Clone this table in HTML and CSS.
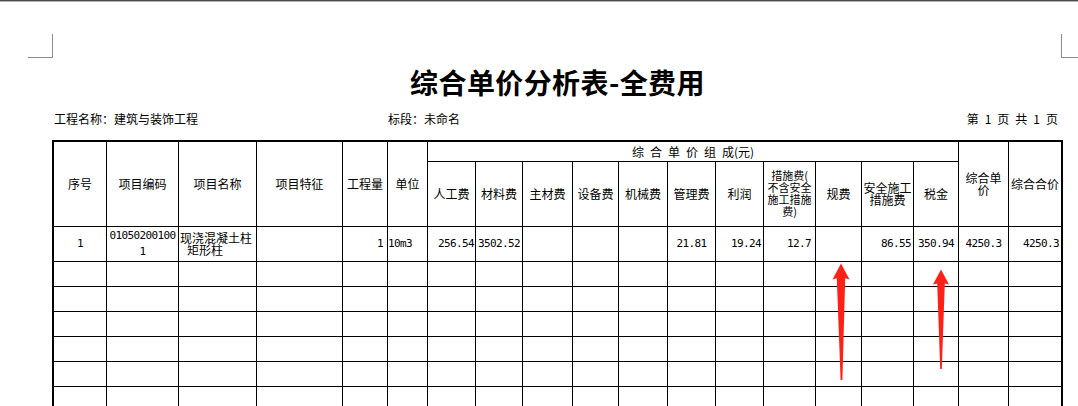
FILE: index.html
```html
<!DOCTYPE html>
<html lang="zh-CN">
<head>
<meta charset="utf-8">
<title>综合单价分析表-全费用</title>
<link rel="stylesheet" href="styles.css">
</head>
<body>
<div class="page">
  <div class="topbar"></div>
  <div class="marks"><span class="mark mark-l"></span><span class="mark mark-r"></span></div>
  <div class="sheet">
    <h1 class="title">综合单价分析表-全费用</h1>
    <div class="info">
      <span>工程名称：建筑与装饰工程</span>
      <span>标段：未命名</span>
      <span class="pageno">第 1 页 共 1 页</span>
    </div>
    <div class="table-wrap">
      <table class="grid">
        <colgroup>
          <col style="width:53px"><col style="width:72px"><col style="width:78px"><col style="width:86px">
          <col style="width:45px"><col style="width:40px"><col style="width:48px"><col style="width:47px">
          <col style="width:50px"><col style="width:46px"><col style="width:49px"><col style="width:48px">
          <col style="width:48px"><col style="width:52px"><col style="width:46px"><col style="width:52px">
          <col style="width:45px"><col style="width:50px"><col style="width:54px">
        </colgroup>
        <thead>
          <tr class="h1">
            <th rowspan="2">序号</th>
            <th rowspan="2">项目编码</th>
            <th rowspan="2">项目名称</th>
            <th rowspan="2">项目特征</th>
            <th rowspan="2">工程量</th>
            <th rowspan="2">单位</th>
            <th colspan="11" class="group">综 合 单 价 组 成(元)</th>
            <th rowspan="2" class="tight">综合单<br>价</th>
            <th rowspan="2" class="last">综合合价</th>
          </tr>
          <tr class="h2">
            <th>人工费</th>
            <th>材料费</th>
            <th>主材费</th>
            <th>设备费</th>
            <th>机械费</th>
            <th>管理费</th>
            <th>利润</th>
            <th class="tight squeeze">措施费(<br>不含安全<br>施工措施<br>费)</th>
            <th>规费</th>
            <th class="tight">安全施工<br>措施费</th>
            <th>税金</th>
          </tr>
        </thead>
        <tbody>
          <tr class="data">
            <td class="c num">1</td>
            <td class="c num code">010502001001</td>
            <td class="l name"><span class="ln">现浇混凝土柱</span><span class="ln ind">矩形柱</span></td>
            <td></td>
            <td class="r num pr4">1</td>
            <td class="l num">10m3</td>
            <td class="r num pr1">256.54</td>
            <td class="r num">3502.52</td>
            <td></td>
            <td></td>
            <td></td>
            <td class="c num">21.81</td>
            <td class="r num">19.24</td>
            <td class="r num pr4">12.7</td>
            <td></td>
            <td class="r num">86.55</td>
            <td class="c num">350.94</td>
            <td class="c num">4250.3</td>
            <td class="r num last">4250.3</td>
          </tr>
          <tr class="empty"><td></td><td></td><td></td><td></td><td></td><td></td><td></td><td></td><td></td><td></td><td></td><td></td><td></td><td></td><td></td><td></td><td></td><td></td><td class="last"></td></tr>
          <tr class="empty"><td></td><td></td><td></td><td></td><td></td><td></td><td></td><td></td><td></td><td></td><td></td><td></td><td></td><td></td><td></td><td></td><td></td><td></td><td class="last"></td></tr>
          <tr class="empty"><td></td><td></td><td></td><td></td><td></td><td></td><td></td><td></td><td></td><td></td><td></td><td></td><td></td><td></td><td></td><td></td><td></td><td></td><td class="last"></td></tr>
          <tr class="empty"><td></td><td></td><td></td><td></td><td></td><td></td><td></td><td></td><td></td><td></td><td></td><td></td><td></td><td></td><td></td><td></td><td></td><td></td><td class="last"></td></tr>
          <tr class="empty"><td></td><td></td><td></td><td></td><td></td><td></td><td></td><td></td><td></td><td></td><td></td><td></td><td></td><td></td><td></td><td></td><td></td><td></td><td class="last"></td></tr>
          <tr class="empty"><td></td><td></td><td></td><td></td><td></td><td></td><td></td><td></td><td></td><td></td><td></td><td></td><td></td><td></td><td></td><td></td><td></td><td></td><td class="last"></td></tr>
          <tr class="empty"><td></td><td></td><td></td><td></td><td></td><td></td><td></td><td></td><td></td><td></td><td></td><td></td><td></td><td></td><td></td><td></td><td></td><td></td><td class="last"></td></tr>
        </tbody>
      </table>
      <svg class="arrow arrow-1" width="20" height="118" viewBox="0 0 20 118" aria-hidden="true">
        <polygon points="10,0.5 18.5,16.5 14.2,15.2 11.4,117 9.6,117 5.8,15.2 1.5,16.5" fill="#ff2016"/>
      </svg>
      <svg class="arrow arrow-2" width="20" height="101" viewBox="0 0 20 101" aria-hidden="true">
        <polygon points="10,0.5 18,15.5 13.8,14.5 10.8,100 9.2,100 6.2,14.5 2,15.5" fill="#ff2016"/>
      </svg>
    </div>
  </div>
</div>
</body>
</html>
```

FILE: styles.css
```css
html, body {
  margin: 0;
  padding: 0;
  background: #ffffff;
  overflow: hidden;
}

body {
  font-family: "Noto Sans CJK SC", "Liberation Sans", sans-serif;
  font-size: 12px;
  color: #000;
}

.page {
  width: 1078px;
  height: 406px;
  overflow: hidden;
}

.topbar {
  height: 1px;
  background: #4c4c4c;
  border-bottom: 1px solid #b4b4b4;
}

.marks {
  display: flex;
  justify-content: space-between;
  margin-top: 32px;
  height: 24px;
}

.mark {
  display: block;
  height: 24px;
  box-sizing: border-box;
  border-bottom: 1px solid #8c8c8c;
}

.mark-l {
  width: 25px;
  margin-left: 28px;
  border-right: 1px solid #8c8c8c;
}

.mark-r {
  width: 17px;
  border-left: 1px solid #8c8c8c;
}

.sheet {
  margin-left: 52px;
  width: 1011px;
}

.title {
  margin: 8px 0 0;
  font-size: 28px;
  line-height: 32px;
  font-weight: 700;
  text-align: center;
  letter-spacing: 0.4px;
}

.info {
  display: grid;
  grid-template-columns: 334px 1fr auto;
  margin-top: 13px;
  padding: 0 5px 0 2px;
  line-height: 16px;
  font-size: 12px;
}

.pageno {
  word-spacing: 3.3px;
}

.table-wrap {
  position: relative;
  margin-top: 13px;
}

.grid {
  border-collapse: separate;
  border-spacing: 0;
  table-layout: fixed;
  width: 1011px;
  border-top: 2px solid #000;
  border-left: 2px solid #000;
}

.grid th,
.grid td {
  box-sizing: border-box;
  padding: 0;
  border-right: 1px solid #000;
  border-bottom: 1px solid #000;
  font-weight: 400;
  font-size: 12px;
  line-height: 14px;
  text-align: center;
  vertical-align: middle;
  overflow: hidden;
}

.grid .last {
  border-right: 2px solid #000;
}

.h1 > th { height: 20px; }
.h2 > th { height: 65px; }
.data > td { height: 35px; }
.empty > td { height: 25px; }

.group {
  word-spacing: 3.3px;
}

.grid th.tight {
  line-height: 12px;
}

.grid th.squeeze {
  font-size: 11px;
  line-height: 11.8px;
  letter-spacing: 0;
}

.num {
  font-family: "DejaVu Sans Mono", "Liberation Mono", monospace;
  font-size: 11px !important;
  letter-spacing: -0.62px;
}

.grid .c { text-align: center; }
.grid .r { text-align: right; padding-right: 2px; }
.grid .l { text-align: left; }
.grid .pr1 { padding-right: 1px; }
.grid .pr4 { padding-right: 4px; }

.grid .code {
  word-break: break-all;
  line-height: 16px;
}

.grid .name {
  line-height: 12px;
  padding-left: 1px;
}

.ln {
  display: block;
  white-space: nowrap;
}

.ind {
  padding-left: 7px;
}

.arrow {
  position: absolute;
  display: block;
}

.arrow-1 {
  left: 779px;
  top: 123px;
}

.arrow-2 {
  left: 879px;
  top: 129px;
}
```
